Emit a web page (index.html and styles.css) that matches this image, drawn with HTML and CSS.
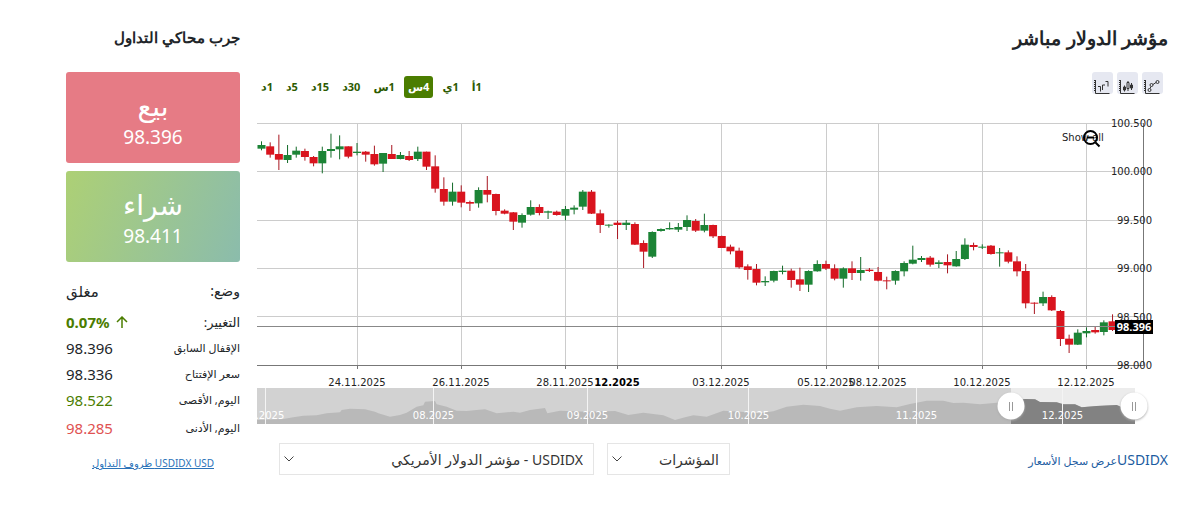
FILE: index.html
```html
<!DOCTYPE html>
<html lang="ar" dir="rtl">
<head>
<meta charset="utf-8">
<meta name="viewport" content="width=device-width, initial-scale=1">
<title>مؤشر الدولار مباشر</title>
<link rel="stylesheet" href="styles.css">
</head>
<body>
<div class="page">
  <main class="market">
    <h1 class="market-title">مؤشر الدولار مباشر</h1>
    <div class="toolbar">
      <div class="chart-types">
        <button class="type-btn" type="button" aria-label="خط"><svg viewBox="0 0 21 21"><path class="axis" d="M3.500 7v13.500M3.500 20.500h14"/><path class="axis-dots" d="M2.500 7v12"/><g class="stroke"><circle cx="7.500" cy="17" r="1.500"/><circle cx="9.500" cy="12" r="1.500"/><circle cx="15.500" cy="9" r="1.500"/><path d="M8 15.500l1-2M11 11.500l3-2"/></g></svg></button>
        <button class="type-btn" type="button" aria-label="شموع"><svg viewBox="0 0 21 21"><path class="axis" d="M3.500 7v13.500M3.500 20.500h14"/><path class="axis-dots" d="M2.500 7v12"/><g class="stroke"><path d="M7.500 12.500v6M11 8v10M14.500 10v7"/><path class="solid" d="M6.500 14h2v3h-2zM13.500 12h2v3h-2z"/><path class="hollow" d="M10 9.500h2v6h-2z"/></g></svg></button>
        <button class="type-btn" type="button" aria-label="أعمدة"><svg viewBox="0 0 21 21"><path class="axis" d="M3.500 7v13.500M3.500 20.500h14"/><path class="axis-dots" d="M2.500 7v12"/><g class="stroke"><path d="M6 13.500h2.500v5M10.500 17v-5h2.500M13.500 8.500h2.500v5"/></g></svg></button>
      </div>
      <div class="periods">
        <button class="period" type="button">1أ</button>
        <button class="period" type="button">1ي</button>
        <button class="period active" type="button">4س</button>
        <button class="period" type="button">1س</button>
        <button class="period" type="button">30د</button>
        <button class="period" type="button">15د</button>
        <button class="period" type="button">5د</button>
        <button class="period" type="button">1د</button>
      </div>
    </div>
    <svg class="chart" id="chart" viewBox="0 0 911 312" role="img" aria-label="USDIDX">
      <g id="grid"></g>
      <g id="candles"></g>
      <path class="price-line" d="M0 211.500H886"/>
      <g id="labels"></g>
      <rect class="price-tag" x="858" y="205" width="38" height="14"/>
      <text class="price-text" x="877" y="216">98.396</text>
      <text class="show-all" x="805" y="26">Show all</text>
      <g class="magnifier"><circle cx="833.500" cy="22.500" r="6.500"/><path d="M830 22.500h7M838.500 27.500l4 4"/></g>
      <g id="overview"></g>
    </svg>
    <div class="controls">
      <a class="history" href="#history"><span class="ticker">USDIDX</span>عرض سجل الأسعار</a>
      <div class="pickers">
        <div class="picker picker-small">
          <select aria-label="المؤشرات"><option>المؤشرات</option></select>
          <svg class="chevron" viewBox="0 0 10 6"><path d="M.5 .5l4.500 4.500l4.500-4.500"/></svg>
        </div>
        <div class="picker picker-large">
          <select aria-label="USDIDX"><option>USDIDX - مؤشر الدولار الأمريكي</option></select>
          <svg class="chevron" viewBox="0 0 10 6"><path d="M.5 .5l4.500 4.500l4.500-4.500"/></svg>
        </div>
      </div>
    </div>
  </main>
  <aside class="trade">
    <h2 class="trade-title">جرب محاكي التداول</h2>
    <button class="deal sell" type="button"><span class="deal-name">بيع</span><span class="deal-price">98.396</span></button>
    <button class="deal buy" type="button"><span class="deal-name">شراء</span><span class="deal-price">98.411</span></button>
    <dl class="stats">
      <div class="stat stat-wide"><dt>وضع:</dt><dd>مغلق</dd></div>
      <div class="stat stat-change"><dt>التغيير:</dt><dd class="up change"><svg class="arrow" viewBox="0 0 12 12"><path d="M6 12V1M1 6l5-5l5 5"/></svg><span>0.07%</span></dd></div>
      <div class="stat"><dt>الإقفال السابق</dt><dd>98.396</dd></div>
      <div class="stat"><dt>سعر الإفتتاح</dt><dd>98.336</dd></div>
      <div class="stat"><dt>اليوم, الأقصى</dt><dd class="up">98.522</dd></div>
      <div class="stat stat-last"><dt>اليوم, الأدنى</dt><dd class="down">98.285</dd></div>
    </dl>
    <a class="terms" href="#terms">USDIDX USD ظروف التداول</a>
  </aside>
</div>
<script src="chart.js"></script>
</body>
</html>
```
FILE: styles.css
```css
* { box-sizing: border-box; }
body { margin: 0; background: #fff; color: #212529; font-family: "Noto Sans", "DejaVu Sans", sans-serif; }
h1, h2, dl, dd { margin: 0; }
button, select { font: inherit; color: inherit; }
.page { display: flex; gap: 17px; margin: 0 32px 0 66px; padding: 24px 0 33px; border-bottom: 2px solid #f9f9f9; }
.market { flex: 1; min-width: 0; }
.market-title { font: bold 19px/30px "Liberation Sans", sans-serif; }
.toolbar { display: flex; justify-content: space-between; align-items: flex-start; margin-top: 18px; padding-right: 5px; height: 43px; }
.chart-types { display: flex; gap: 4px; }
.type-btn { width: 21px; height: 22px; padding: 0; border: 0; border-radius: 3px; background: #e6e8f1; }
.type-btn svg { display: block; width: 21px; height: 21px; fill: none; stroke: #333; }
.axis-dots { stroke-dasharray: 1 1; }
.stroke { stroke-width: 1; }
.solid { fill: #333; }
.hollow { fill: #e6e8f1; }
.periods { display: flex; gap: 5px; margin-top: 4px; }
.period { padding: 0 4px; border: 0; border-radius: 3px; background: none; color: #2c5a00; font-weight: bold; font-size: 11px; line-height: 22px; }
.period.active { background: #4b7d00; color: #fff; }
.chart { display: block; width: 100%; height: auto; direction: ltr; font: 10px "DejaVu Sans", sans-serif; fill: #222; }
.grid-line { stroke: #ccc; }
.axis-line { stroke: #777; }
.price-line { stroke: #888; }
.up-candle { fill: #1c8436; stroke: #126a28; }
.down-candle { fill: #d9141e; stroke: #a81620; }
.candle-body { stroke-width: 0; }
.price-tag { fill: #000; }
.price-text { fill: #fff; font: bold 11px "Open Sans", sans-serif; text-anchor: middle; }
.date { text-anchor: middle; }
.month { font-weight: bold; fill: #000; }
.magnifier { fill: none; stroke: #000; stroke-width: 2; }
.track { fill: #d2d2d2; }
.track-on { fill: #ececec; }
.area { fill: #b9b9b9; }
.area-on { fill: #828282; }
.split { stroke: #f4f4f4; }
.overview-text { fill: #fff; text-anchor: middle; }
.handle { fill: #fff; filter: drop-shadow(0 1px 1px #aaa); }
.grip { stroke: #999; }
.controls { display: flex; justify-content: space-between; margin-top: 16px; padding-left: 22px; }
.history { color: #1c5c9f; font-size: 11px; line-height: 34px; text-decoration: none; }
.ticker { font-size: 14px; }
.pickers { display: flex; gap: 13px; }
.picker { position: relative; }
.picker select { width: 100%; height: 32px; padding: 0 10px; border: 1px solid #e5e5e5; border-radius: 0; appearance: none; background: #fff; color: #333; font-size: 14px; }
.picker-small { width: 123px; }
.picker-large { width: 315px; }
.chevron { position: absolute; left: 5px; top: 13px; width: 10px; fill: none; stroke: #444; }
.trade { width: 174px; display: flex; flex-direction: column; }
.trade-title { font: bold 15px/28px "Liberation Sans", sans-serif; margin-bottom: 20px; }
.deal { display: flex; flex-direction: column; align-items: center; justify-content: center; height: 91px; padding: 4px 0 0; margin-bottom: 8px; border: 0; border-radius: 3px; color: #fff; }
.sell { background: #e67b85; }
.buy { background: linear-gradient(110deg, #add075, #8bbcac); }
.deal-name { font-size: 28px; line-height: 34px; }
.deal-price { font-size: 19px; line-height: 30px; }
.stats { margin-top: 8px; }
.stat { display: flex; justify-content: space-between; height: 26px; line-height: 26px; font-size: 11px; }
.stat dd { font-size: 15px; }
.stat-wide { height: 31px; font-size: 14px; }
.stat-change { font-size: 13px; }
.stat-last { margin-top: 2px; }
.stat .up { color: #4b7d00; }
.stat .down { color: #e05252; }
.stat .change { display: flex; gap: 6px; align-items: center; font-weight: bold; }
.arrow { width: 12px; height: 12px; fill: none; stroke: #4b7d00; stroke-width: 1.5; }
.terms { margin-top: 12px; text-align: center; font-size: 10px; line-height: 20px; color: #2a72b8; }
```
FILE: chart.js
```javascript
const NS = "http://www.w3.org/2000/svg";
function add(parent, tag, attrs, text) {
  const el = document.createElementNS(NS, tag);
  for (const k in attrs) el.setAttribute(k, attrs[k]);
  if (text) el.textContent = text;
  document.getElementById(parent).appendChild(el);
}

// Each block: top offset, then "direction high top bottom low" in thirds of a unit.
const blocks = [
  [5, "G64 75 86 91,R67 79 104 113,R44 102 119 150,G75 105 120 129,G80 92 104 113,R86 93 111 122,R108 111 130 139,G80 93 130 160,G41 87 93 113,G46 79 88 118,R79 79 110 115,G69 95 99 106,R93 95 104 125,R77 102 133 137,G99 99 131 156,R75 102 117 117,G96 105 117 118,R93 108 120 123,G80 95 117 123,R95 95 140 150,R106 139 206 218,R172 207 245 257,G188 215 245 257,R196 215 248 262,R242 246 251 273"],
  [45, "G82 90 130 143,R48 90 104 127,R101 102 153 166,R148 152 161 163,R156 157 185 210,G160 165 188 203,G121 141 164 167,R133 141 159 166,G152 154 158 177,R152 155 165 167,G138 147 167 181,G136 143 149 163,G90 95 140 150,R90 95 161 162,R149 160 195 219,G193 194 197 203,R182 188 195 237,G180 188 195 210,R187 192 254 255,R241 249 275 324,G214 216 290 294,G205 207 213 215,G187 204 208 209,G189 201 209 216,G166 180 201 213"],
  [85, "R57 63 92 96,G41 75 92 97,R74 75 109 114,R107 108 144 144,R134 140 154 163,R143 152 202 206,R193 199 210 239,R192 207 248 256,G229 243 247 258,G212 213 242 247,G197 212 216 223,R206 212 240 263,R203 238 254 273,G211 213 254 276,G181 192 214 215,R182 192 206 210,R193 205 236 241,G202 205 236 263,R184 205 219 240,G171 210 219 242,R204 209 213 216,R201 216 242 244,R230 241 243 268"],
  [105, "G151 153 182 194,G124 129 154 169,G77 119 131 133,G108 114 120 126,R108 113 134 140,G121 127 132 144,R103 126 136 160,G93 117 139 140,G55 74 117 120,R68 75 81 91,G73 80 83 87,R75 77 102 104,G84 97 100 140,R91 97 125 130,R109 124 154 169,R132 153 250 265,R247 248 251 282,G215 231 250 258,R226 231 271 273,R270 273 357 378,R344 356 374 399,G328 338 374 375,G322 333 340 352,R320 330 337 341,G301 307 336 346,R283 304 330 333"]
];

[8.5, 56.5, 105.5, 153.5, 201.5].forEach(y => add("grid", "path", { class: "grid-line", d: `M0 ${y}H886` }));
[100.5, 204.5, 308.5, 360.5, 464.5, 569.5, 621.5, 725.5, 829.5].forEach(x => {
  add("grid", "path", { class: "grid-line", d: `M${x} 8V250` });
  add("grid", "path", { class: "axis-line", d: `M${x} 250v4` });
});
add("grid", "path", { class: "axis-line", d: "M0 250.500H886M886.5 8V251" });

let index = 0;
for (const [top, rows] of blocks) {
  for (const row of rows.split(",")) {
    const [high, open, close, low] = row.slice(1).split(" ").map(v => top + v / 3);
    const x = 4.5 + 8.684 * index++;
    const cls = row[0] === "G" ? "up-candle" : "down-candle";
    add("candles", "path", { class: cls, d: `M${x} ${high}V${low}` });
    add("candles", "rect", { class: cls + " candle-body", x: x - 4, y: open, width: 8, height: Math.max(close - open, 1) });
  }
}

["100.500", "100.000", "99.500", "99.000", "98.500", "98.000"].forEach((t, i) =>
  add("labels", "text", { x: i < 2 ? 854 : 860, y: 12 + 48.4 * i }, t));
[[100, "24.11.2025"], [204, "26.11.2025"], [308, "28.11.2025"], [360, "12.2025"], [464, "03.12.2025"],
 [569, "05.12.2025"], [621, "08.12.2025"], [725, "10.12.2025"], [829, "12.12.2025"]].forEach(([x, t]) =>
  add("labels", "text", { class: t.length === 7 ? "date month" : "date", x, y: 271 }, t));

const outline = [
  [-7, "21 150,100 147,130 142,160 137,200 136,230 130,270 127,275 120,300 116,345 118,375 125,385 130,420 140,450 135,470 128,500 110,520 106,525 95,555 93,560 103,590 110,620 122,650 123,680 120,705 118,740 130,790 125,810 128,840 120,885 114"],
  [283, "22 130,60 122,140 125,225 123,265 135,310 128,370 136,405 150,435 142,460 136,500 140,550 122,600 125,660 130,700 124,740 110,790 104,840 108"],
  [573, "0 116,30 122,80 112,140 108,200 112,240 102,290 92,340 92,370 99,400 98,450 103,500 98,540 95,585 87,615 88,630 96,680 97,700 103,735 103,755 112,800 108,860 105,890 118,915 125"]
].flatMap(([left, list]) => list.split(",").map(p => {
  const [x, y] = p.split(" ").map(Number);
  return [left + x / 3, 255 + y / 3];
}));
const shape = pts => "M" + pts[0][0] + " 309L" + pts.map(p => p.join(" ")).join("L") + "V309Z";
add("overview", "rect", { class: "track", x: 0, y: 273, width: 878, height: 36 });
add("overview", "rect", { class: "track-on", x: 754, y: 273, width: 124, height: 36 });
add("overview", "path", { class: "area", d: shape(outline) });
add("overview", "path", { class: "area-on", d: shape([[754, 286], ...outline.filter(p => p[0] > 754)]) });
[[8.5, ".2025"], [176.5, "08.2025"], [330.5, "09.2025"], [491.5, "10.2025"], [659.5, "11.2025"], [805.5, "12.2025"]].forEach(([x, t]) => {
  add("overview", "path", { class: "split", d: `M${x} 273V309` });
  add("overview", "text", { class: "overview-text", x: t.length < 7 ? 13 : x, y: 304 }, t);
});
[754, 877].forEach(x => {
  add("overview", "circle", { class: "handle", cx: x, cy: 291, r: 13.5 });
  add("overview", "path", { class: "grip", d: `M${x - 1.5} 287v9M${x + 1.5} 287v9` });
});
```
